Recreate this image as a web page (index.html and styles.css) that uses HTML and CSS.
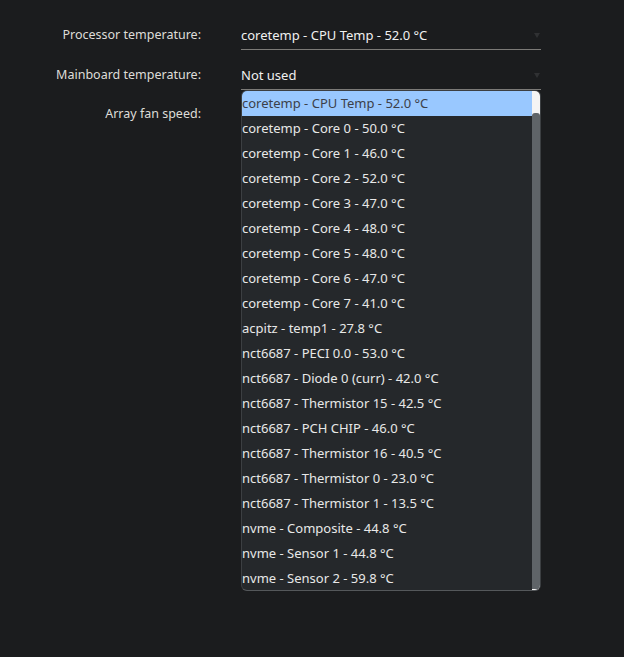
FILE: index.html
```html
<!DOCTYPE html>
<html>
<head>
<meta charset="utf-8">
<link rel="stylesheet" href="styles.css">
</head>
<body>
<div class="form">
  <div class="row">
    <div class="label">Processor temperature:</div>
    <div class="field">
      <div class="select"><span>coretemp - CPU Temp - 52.0 °C</span><span class="caret"></span></div>
    </div>
  </div>
  <div class="row">
    <div class="label">Mainboard temperature:</div>
    <div class="field">
      <div class="select"><span>Not used</span><span class="caret"></span></div>
      <div class="popup">
        <div class="options">
          <div class="opt selected">coretemp - CPU Temp - 52.0 °C</div>
          <div class="opt">coretemp - Core 0 - 50.0 °C</div>
          <div class="opt">coretemp - Core 1 - 46.0 °C</div>
          <div class="opt">coretemp - Core 2 - 52.0 °C</div>
          <div class="opt">coretemp - Core 3 - 47.0 °C</div>
          <div class="opt">coretemp - Core 4 - 48.0 °C</div>
          <div class="opt">coretemp - Core 5 - 48.0 °C</div>
          <div class="opt">coretemp - Core 6 - 47.0 °C</div>
          <div class="opt">coretemp - Core 7 - 41.0 °C</div>
          <div class="opt">acpitz - temp1 - 27.8 °C</div>
          <div class="opt">nct6687 - PECI 0.0 - 53.0 °C</div>
          <div class="opt">nct6687 - Diode 0 (curr) - 42.0 °C</div>
          <div class="opt">nct6687 - Thermistor 15 - 42.5 °C</div>
          <div class="opt">nct6687 - PCH CHIP - 46.0 °C</div>
          <div class="opt">nct6687 - Thermistor 16 - 40.5 °C</div>
          <div class="opt">nct6687 - Thermistor 0 - 23.0 °C</div>
          <div class="opt">nct6687 - Thermistor 1 - 13.5 °C</div>
          <div class="opt">nvme - Composite - 44.8 °C</div>
          <div class="opt">nvme - Sensor 1 - 44.8 °C</div>
          <div class="opt">nvme - Sensor 2 - 59.8 °C</div>
        </div>
        <div class="scrollbar"><div class="thumb"></div></div>
      </div>
    </div>
  </div>
  <div class="row row3">
    <div class="label">Array fan speed:</div>
    <div class="field">
      <div class="select"><span></span><span class="caret"></span></div>
    </div>
  </div>
</div>
</body>
</html>
```
FILE: styles.css
```css
html, body {
  margin: 0;
  padding: 0;
  background: #1b1c1e;
  width: 624px;
  height: 657px;
  overflow: hidden;
}
body {
  font-family: "Noto Sans", "Open Sans", sans-serif;
  font-size: 13px;
  color: #e6e6e6;
}
.form {
  padding-top: 22px;
  display: flex;
  flex-direction: column;
  gap: 12px;
}
.row {
  display: grid;
  grid-template-columns: 201px 300px;
  column-gap: 40px;
  align-items: center;
}
.label {
  text-align: right;
  color: #dedcd8;
  font-size: 12.5px;
  line-height: 18px;
  padding-bottom: 3px;
}
.row3 .label {
  align-self: start;
  padding-top: 3px;
}
.field {
  position: relative;
}
.select {
  height: 27px;
  box-sizing: content-box;
  border-bottom: 1px solid #7c7a77;
  display: flex;
  align-items: center;
  justify-content: space-between;
  color: #f0f0f0;
  padding-bottom: 0;
}
.select > span:first-child {
  position: relative;
  top: -1px;
}
.caret {
  width: 0;
  height: 0;
  border-left: 3px solid transparent;
  border-right: 3px solid transparent;
  border-top: 5px solid #303133;
  margin-right: 1px;
}
.popup {
  position: absolute;
  top: 100%;
  left: 0;
  width: 300px;
  height: 501px;
  box-sizing: border-box;
  background: #25282b;
  border: 1px solid #3c3f42;
  border-bottom-color: #55585b;
  border-radius: 6px;
  overflow: hidden;
  display: flex;
  z-index: 5;
}
.options {
  flex: 1;
}
.opt {
  height: 25px;
  line-height: 25px;
  color: #e8e8e8;
  white-space: nowrap;
}
.opt.selected {
  background: #99c8ff;
  color: #3c4049;
}
.scrollbar {
  width: 8px;
  background: #f4f4f4;
  display: flex;
  flex-direction: column;
  padding-top: 22px;
  padding-bottom: 1px;
}
.thumb {
  flex: 1;
  background: #5f6468;
  border-radius: 3px 3px 0 0;
}
```
